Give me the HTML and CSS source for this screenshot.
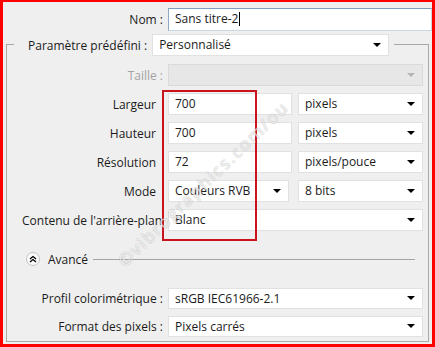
FILE: index.html
```html
<!DOCTYPE html>
<html lang="fr">
<head>
  <meta charset="UTF-8" />
  <title>Nouveau document</title>
  <link rel="stylesheet" href="styles.css">
</head>
<body>
  <div class="frame">
    <div class="name-row">
      <label class="lbl">Nom :</label>
      <div class="field name-field">Sans titre-2<span class="caret"></span></div>
    </div>

    <fieldset class="preset">
      <legend>
        <span class="legend-lbl">Paramètre prédéfini :</span>
        <div class="field select preset-select">Personnalisé<span class="arrow"></span></div>
      </legend>

      <div class="row first">
        <span class="lbl off">Taille :</span>
        <div class="field select disabled wide"><span class="arrow"></span></div>
      </div>

      <div class="row">
        <span class="lbl bare">Largeur</span>
        <div class="field num">700</div>
        <div class="field select unit">pixels<span class="arrow"></span></div>
      </div>
      <div class="row">
        <span class="lbl bare">Hauteur</span>
        <div class="field num">700</div>
        <div class="field select unit">pixels<span class="arrow"></span></div>
      </div>
      <div class="row">
        <span class="lbl bare">Résolution</span>
        <div class="field num">72</div>
        <div class="field select unit">pixels/pouce<span class="arrow"></span></div>
      </div>
      <div class="row">
        <span class="lbl bare">Mode</span>
        <div class="field select mode">Couleurs RVB<span class="arrow"></span></div>
        <div class="field select unit">8 bits<span class="arrow"></span></div>
      </div>
      <div class="row">
        <span class="lbl long">Contenu de l'arrière-plan</span>
        <div class="field select wide">Blanc<span class="arrow"></span></div>
      </div>

      <div class="advanced">
        <span class="toggle">
          <svg width="8" height="8" viewBox="0 0 8 8"><path d="M1 4 L4 1.5 L7 4 M1 7 L4 4.5 L7 7" fill="none" stroke="#000" stroke-width="1.3"/></svg>
        </span>
        <span class="adv-lbl">Avancé</span>
        <span class="rule"></span>
      </div>

      <div class="row adv-first">
        <span class="lbl">Profil colorimétrique :</span>
        <div class="field select wide">sRGB IEC61966-2.1<span class="arrow"></span></div>
      </div>
      <div class="row adv">
        <span class="lbl">Format des pixels :</span>
        <div class="field select wide">Pixels carrés<span class="arrow"></span></div>
      </div>
    </fieldset>

    <div class="highlight"></div>
    <div class="watermark">©vibrographics.com/ou</div>
  </div>
</body>
</html>
```

FILE: styles.css
```css
* {
  box-sizing: border-box;
}

body {
  margin: 0;
  font-family: "Open Sans", "Noto Sans", sans-serif;
  font-size: 12px;
  color: #1b1b1b;
  background: #ffffff;
}

.frame {
  position: relative;
  width: 435px;
  height: 347px;
  border: 3px solid #ff0000;
  border-top-width: 2px;
  background: #efefef;
  padding-top: 6px;
  overflow: hidden;
}

.name-row {
  display: flex;
  align-items: center;
  height: 23px;
}

.lbl {
  flex: none;
  width: 160px;
  text-align: right;
  white-space: nowrap;
  margin-right: 5px;
}

.field {
  position: relative;
  height: 22px;
  line-height: 20px;
  padding-left: 6px;
  background: #ffffff;
  border: 1px solid #e1e1e1;
  white-space: nowrap;
  overflow: hidden;
}

.name-field {
  flex: 1;
  height: 23px;
  border-color: #7b9ec2 #c9d7e4 #c9d7e4 #8ea9c6;
}

.caret {
  display: inline-block;
  width: 1px;
  height: 14px;
  margin-left: 1px;
  vertical-align: -3px;
  background: #000;
}

.arrow {
  position: absolute;
  right: 7px;
  top: 8px;
  width: 0;
  height: 0;
  border-left: 4px solid transparent;
  border-right: 4px solid transparent;
  border-top: 4px solid #000;
}

.preset {
  margin: 1px 3px 0 3px;
  padding: 0 0 4px 0;
  border: 1px solid #a9a9a9;
  min-width: 0;
}

.preset legend {
  display: flex;
  align-items: center;
  margin-left: 7px;
  padding: 2px 5px 0 14px;
}

.legend-lbl {
  white-space: nowrap;
  margin-right: 5px;
}

.preset-select {
  width: 237px;
}

.row {
  display: flex;
  align-items: center;
  margin-top: 7px;
}

.row.first {
  margin-top: 8px;
}

.row .lbl {
  width: 156px;
}

.row .lbl.bare {
  width: 149px;
  margin-right: 12px;
}

.row .lbl.long {
  width: 146px;
  margin-right: 15px;
  padding-left: 15px;
  text-align: left;
}

.lbl.off {
  color: #a3a3a3;
}

.wide {
  width: 255px;
}

.disabled {
  background: #e7e7e7;
  border-color: #dadada;
}

.disabled .arrow {
  border-top-color: #b4b4b4;
}

.num {
  width: 124px;
  margin-right: 6px;
}

.mode {
  width: 121px;
  margin-right: 9px;
}

.unit {
  width: 125px;
}

.advanced {
  display: flex;
  align-items: center;
  height: 16px;
  margin-top: 20px;
  padding-left: 19px;
}

.toggle {
  display: flex;
  align-items: center;
  justify-content: center;
  width: 14px;
  height: 14px;
  border-radius: 50%;
  background: #fafafa;
  border: 1px solid #c4c4c4;
}

.adv-lbl {
  margin-left: 8px;
}

.rule {
  width: 322px;
  height: 1px;
  margin-left: 5px;
  background: #a3a3a3;
}

.row.adv-first {
  margin-top: 21px;
}

.row.adv .field,
.row.adv-first .field {
  height: 21px;
  line-height: 19px;
}

.row.adv .arrow,
.row.adv-first .arrow {
  top: 7px;
}

.highlight {
  position: absolute;
  left: 159px;
  top: 88px;
  width: 95px;
  height: 151px;
  border: 2px solid #c9141b;
}

.watermark {
  position: absolute;
  left: 55px;
  top: 170px;
  width: 290px;
  text-align: center;
  font-size: 17px;
  letter-spacing: 2px;
  color: rgba(255, 255, 255, 0.6);
  text-shadow: 1px 0 0 rgba(160, 160, 160, 0.22), -1px 0 0 rgba(160, 160, 160, 0.22),
    0 1px 0 rgba(160, 160, 160, 0.22), 0 -1px 0 rgba(160, 160, 160, 0.22);
  transform: rotate(-44deg);
  pointer-events: none;
}
```
